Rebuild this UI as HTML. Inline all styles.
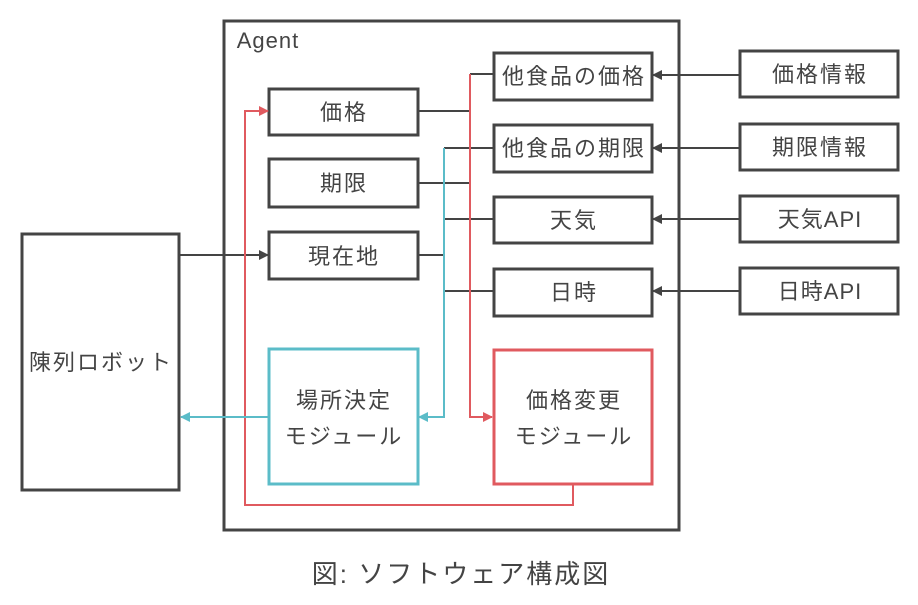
<!DOCTYPE html>
<html><head><meta charset="utf-8"><style>
html,body{margin:0;padding:0;background:#fff;width:918px;height:605px;overflow:hidden}
svg text{font-family:"Liberation Sans","Noto Sans CJK JP",sans-serif;fill:#444}
</style></head><body>
<svg width="918" height="605" viewBox="0 0 918 605" xmlns="http://www.w3.org/2000/svg">
<defs>
<marker id="ag" markerWidth="10" markerHeight="10" refX="9" refY="5" orient="auto" markerUnits="userSpaceOnUse"><path d="M0,0 L10,5 L0,10z" fill="#444"/></marker>
<marker id="ar" markerWidth="10" markerHeight="10" refX="9" refY="5" orient="auto" markerUnits="userSpaceOnUse"><path d="M0,0 L10,5 L0,10z" fill="#e05a5f"/></marker>
<marker id="ac" markerWidth="10" markerHeight="10" refX="9" refY="5" orient="auto" markerUnits="userSpaceOnUse"><path d="M0,0 L10,5 L0,10z" fill="#5bbcc8"/></marker>
</defs>
<g fill="none" stroke="#444" stroke-width="3">
<rect x="224" y="21" width="455" height="509"/>
<rect x="22" y="234" width="157" height="256"/>
<rect x="269" y="89" width="149" height="46"/>
<rect x="269" y="159" width="149" height="48"/>
<rect x="269" y="232" width="149" height="47"/>
<rect x="494" y="53" width="158" height="47"/>
<rect x="494" y="125" width="158" height="47"/>
<rect x="494" y="197" width="158" height="46"/>
<rect x="494" y="269" width="158" height="47"/>
<rect x="740" y="51" width="158" height="46"/>
<rect x="740" y="124" width="158" height="46"/>
<rect x="740" y="196" width="158" height="46"/>
<rect x="740" y="268" width="158" height="46"/>
</g>
<rect x="269" y="349" width="149" height="135" fill="none" stroke="#5bbcc8" stroke-width="3"/>
<rect x="494" y="350" width="158" height="134" fill="none" stroke="#e05a5f" stroke-width="3"/>
<g fill="none" stroke="#444" stroke-width="2">
<path d="M418 111H470M418 183H470M418 255H444M470 74H493M444 148H493M444 219H493M444 291H493"/>
<path d="M740 75H653" marker-end="url(#ag)"/>
<path d="M740 148H653" marker-end="url(#ag)"/>
<path d="M740 219H653" marker-end="url(#ag)"/>
<path d="M740 291H653" marker-end="url(#ag)"/>
<path d="M179 255H268" marker-end="url(#ag)"/>
</g>
<g fill="none" stroke-width="2">
<path d="M470 74V417H492" stroke="#e05a5f" marker-end="url(#ar)"/>
<path d="M573 485V505H245V111H268" stroke="#e05a5f" marker-end="url(#ar)"/>
<path d="M444 148V417H419" stroke="#5bbcc8" marker-end="url(#ac)"/>
<path d="M268 417H181" stroke="#5bbcc8" marker-end="url(#ac)"/>
</g>
<g font-size="22" text-anchor="middle" letter-spacing="2">
<text x="268" y="48" letter-spacing="1">Agent</text>
<text x="344" y="120">価格</text>
<text x="344" y="191">期限</text>
<text x="344" y="264">現在地</text>
<text x="574" y="84">他食品の価格</text>
<text x="574" y="156">他食品の期限</text>
<text x="574" y="228">天気</text>
<text x="574" y="300">日時</text>
<text x="820" y="82">価格情報</text>
<text x="820" y="155">期限情報</text>
<text x="820" y="227" letter-spacing="1">天気API</text>
<text x="820" y="299" letter-spacing="1">日時API</text>
<text x="101" y="370">陳列ロボット</text>
<text x="344" y="408">場所決定</text>
<text x="344" y="444">モジュール</text>
<text x="574" y="408">価格変更</text>
<text x="574" y="444">モジュール</text>
<text x="461" y="583" font-size="26" letter-spacing="2">図: ソフトウェア構成図</text>
</g>
</svg>
</body></html>
